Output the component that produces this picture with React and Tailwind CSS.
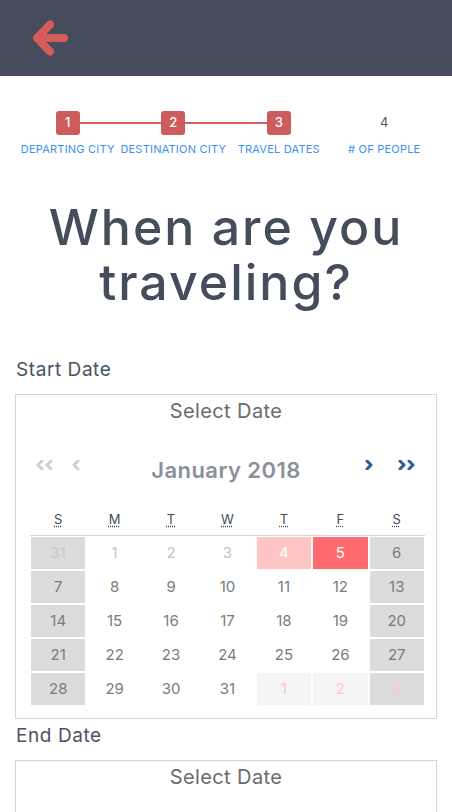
import React from "react";

const font = { fontFamily: "Inter, 'Noto Sans', sans-serif" };

const steps = [
    { n: 1, label: "DEPARTING CITY", done: true },
    { n: 2, label: "DESTINATION CITY", done: true },
    { n: 3, label: "TRAVEL DATES", done: true },
    { n: 4, label: "# OF PEOPLE", done: false },
];

// kind: prev, off, low, sel, norm, next
const weeks = [
    [["31", "prev"], ["1", "off"], ["2", "off"], ["3", "off"], ["4", "low"], ["5", "sel"], ["6", "norm"]],
    [["7", "norm"], ["8", "norm"], ["9", "norm"], ["10", "norm"], ["11", "norm"], ["12", "norm"], ["13", "norm"]],
    [["14", "norm"], ["15", "norm"], ["16", "norm"], ["17", "norm"], ["18", "norm"], ["19", "norm"], ["20", "norm"]],
    [["21", "norm"], ["22", "norm"], ["23", "norm"], ["24", "norm"], ["25", "norm"], ["26", "norm"], ["27", "norm"]],
    [["28", "norm"], ["29", "norm"], ["30", "norm"], ["31", "norm"], ["1", "next"], ["2", "next"], ["3", "next"]],
];

function Chevron({ dir = "left", double = false, color }) {
    const one = dir === "left" ? "M6 1 L2 5 L6 9" : "M2 1 L6 5 L2 9";
    return (
        <svg width={double ? 18 : 8} height="10" viewBox={double ? "0 0 18 10" : "0 0 8 10"} fill="none">
            <path d={one} stroke={color} strokeWidth="3" strokeLinecap="round" strokeLinejoin="round" />
            {double && (
                <path d={one} transform="translate(9 0)" stroke={color} strokeWidth="3" strokeLinecap="round" strokeLinejoin="round" />
            )}
        </svg>
    );
}

function cellClass(kind, col) {
    const weekend = col === 0 || col === 6;
    if (kind === "sel") return "bg-[#ff6b6e] text-white";
    if (kind === "low") return "bg-[#ffc4c4] text-white";
    if (kind === "next") return (weekend ? "bg-[#dcdcdc]" : "bg-[#f5f5f5]") + " text-[#ffc6c6]";
    const bg = weekend ? "bg-[#dcdcdc]" : "bg-white";
    if (kind === "prev") return bg + " text-[#c9c9c9]";
    if (kind === "off") return bg + " text-[#c4c4c4]";
    return bg + " text-[#7b7b7b]";
}

function Calendar() {
    return (
        <div className="border border-[#d4d4d4] pt-[4px] pb-[12px]">
            <div className="text-center text-[20px] leading-[24px] tracking-[0.02em] text-[#6b6b6b]">Select Date</div>
            <div className="mt-[27px] flex h-[40px]">
                <div className="w-[80px] flex items-start pl-[20px] pt-[10px] gap-[18px]">
                    <Chevron dir="left" double color="#cfcfcf" />
                    <Chevron dir="left" color="#cfcfcf" />
                </div>
                <div className="flex-1 text-center text-[22px] leading-[40px] tracking-[0.02em] font-semibold text-[#8b9099]">January 2018</div>
                <div className="w-[80px] flex items-start justify-end pr-[20px] pt-[10px] gap-[25px]">
                    <Chevron dir="right" color="#2b5e90" />
                    <Chevron dir="right" double color="#2b5e90" />
                </div>
            </div>
            <div className="mt-[20px] ml-[14px] w-[395px]">
                <div className="grid grid-cols-7 h-[18px] mb-[7px] text-[13px] leading-[18px] text-[#454b59]">
                    {["S", "M", "T", "W", "T", "F", "S"].map((d, i) => (
                        <div key={i} className="text-center">
                            <span className="underline decoration-dotted underline-offset-2">{d}</span>
                        </div>
                    ))}
                </div>
                <div className="border-t border-[#d6d6d6]">
                    {weeks.map((w, r) => (
                        <div key={r} className="grid grid-cols-7">
                            {w.map(([d, kind], c) => (
                                <div
                                    key={c}
                                    className={"h-[34px] border border-white flex items-center justify-center text-[15px] " + cellClass(kind, c)}
                                >
                                    {d}
                                </div>
                            ))}
                        </div>
                    ))}
                </div>
            </div>
        </div>
    );
}

export default function App() {
    return (
        <div className="w-[452px] min-h-[812px] bg-white" style={font}>
            <div className="h-[76px] bg-[#464c5c] flex items-center pl-[33px]">
                <svg width="36" height="36" viewBox="0 0 36 36" fill="none">
                    <path d="M17 4.5 L4 18 L17 31.5 M4 18 L31 18" stroke="#d35d59" strokeWidth="8" strokeLinecap="round" strokeLinejoin="round" />
                </svg>
            </div>

            <div className="mx-[15px] mt-[35px] grid grid-cols-4">
                {steps.map((s, i) => (
                    <div key={s.n} className="flex flex-col items-center">
                        <div className="flex items-center w-full h-[24px]">
                            <div className={"flex-1 h-[2px] " + (i > 0 && i < 3 ? "bg-[#d26261]" : "")} />
                            {s.done ? (
                                <div className="w-[24px] h-[24px] rounded-[3px] bg-[#cd5c5c] text-white text-[13px] font-medium flex items-center justify-center">
                                    {s.n}
                                </div>
                            ) : (
                                <div className="w-[24px] h-[24px] text-[#555] text-[13px] flex items-center justify-center">{s.n}</div>
                            )}
                            <div className={"flex-1 h-[2px] " + (i < 2 ? "bg-[#d26261]" : "")} />
                        </div>
                        <div className="mt-[7px] text-[11px] leading-[14px] tracking-[0.02em] text-[#3d8ff0] whitespace-nowrap">{s.label}</div>
                    </div>
                ))}
            </div>

            <h1 className="mt-[44px] text-center text-[50px] leading-[55px] tracking-[0.04em] font-medium text-[#454c5c]">
                When are you
                <br />
                traveling?
            </h1>

            <div className="mx-[15px] mt-[48px]">
                <div className="pl-[1px] text-[19px] leading-[24px] tracking-[0.03em] text-[#4b5262]">Start Date</div>
                <div className="mt-[12px]">
                    <Calendar />
                </div>
                <div className="mt-[5px] pl-[1px] text-[19px] leading-[24px] tracking-[0.03em] text-[#4b5262]">End Date</div>
                <div className="mt-[12px] border border-[#d4d4d4] pt-[4px] h-[80px]">
                    <div className="text-center text-[20px] leading-[24px] tracking-[0.02em] text-[#6b6b6b]">Select Date</div>
                </div>
            </div>
        </div>
    );
}
